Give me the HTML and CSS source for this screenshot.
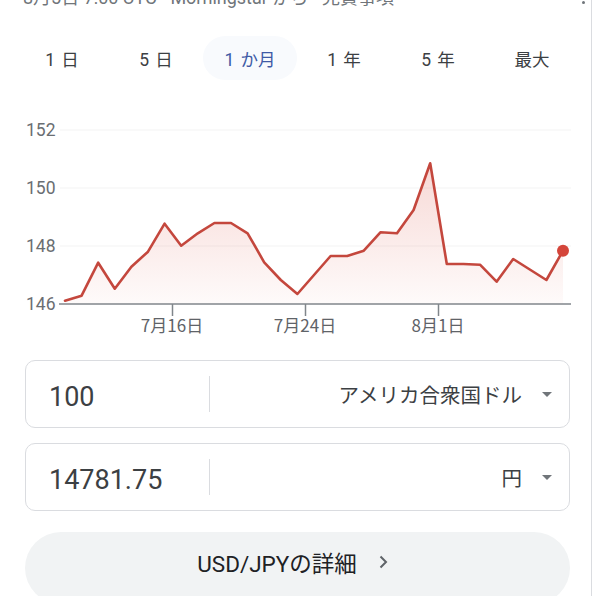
FILE: index.html
```html
<!DOCTYPE html>
<html lang="ja">
<head>
<meta charset="utf-8">
<link rel="stylesheet" href="styles.css">
</head>
<body>
<div class="page">
  <div class="meta">
    <span>8月5日 7:00 UTC · Morningstar から · 免責事項</span>
    <span class="more"></span>
  </div>
  <div class="tabs">
    <div class="tab">1 日</div>
    <div class="tab">5 日</div>
    <div class="tab active">1 か月</div>
    <div class="tab">1 年</div>
    <div class="tab">5 年</div>
    <div class="tab">最大</div>
  </div>
  <svg class="chart" width="591" height="240" viewBox="0 0 591 240" xmlns="http://www.w3.org/2000/svg">
    <defs>
      <linearGradient id="fill" x1="0" y1="60" x2="0" y2="204" gradientUnits="userSpaceOnUse">
        <stop offset="0" stop-color="#e0685c" stop-opacity="0.26"/>
        <stop offset="1" stop-color="#e0685c" stop-opacity="0.03"/>
      </linearGradient>
    </defs>
    <g stroke="#f3f3f3" stroke-width="1">
      <line x1="60" y1="30" x2="571" y2="30"/>
      <line x1="60" y1="88" x2="571" y2="88"/>
      <line x1="60" y1="146" x2="571" y2="146"/>
    </g>
    <g class="ylab">
      <text x="26" y="36">152</text>
      <text x="26" y="94">150</text>
      <text x="26" y="152">148</text>
      <text x="26" y="210">146</text>
    </g>
    <polygon fill="url(#fill)" points="65,200.7 81.6,195.7 98.2,162.7 114.8,188.7 131.4,166.7 148,151.7 164.6,123.7 181.2,145.7 197.8,133.3 214.4,123 231,123 247.6,133.3 264.2,162.3 280.8,180 297.4,194 314,175 330.6,156 347.2,156 363.8,150.7 380.4,132.3 397,133.3 413.6,110 430.2,63.3 446.8,164 463.4,164 480,164.7 496.6,181.7 513.2,159 529.8,169.5 546.4,180 563,150.7 563,204 65,204"/>
    <g stroke="#80868b" stroke-width="1.5">
      <line x1="59" y1="204" x2="571" y2="204"/>
      <line x1="172.5" y1="204" x2="172.5" y2="216"/>
      <line x1="305.5" y1="204" x2="305.5" y2="216"/>
      <line x1="438.5" y1="204" x2="438.5" y2="216"/>
    </g>
    <polyline fill="none" stroke="#c4473d" stroke-width="2.6" stroke-linejoin="round" stroke-linecap="round" points="65,200.7 81.6,195.7 98.2,162.7 114.8,188.7 131.4,166.7 148,151.7 164.6,123.7 181.2,145.7 197.8,133.3 214.4,123 231,123 247.6,133.3 264.2,162.3 280.8,180 297.4,194 314,175 330.6,156 347.2,156 363.8,150.7 380.4,132.3 397,133.3 413.6,110 430.2,63.3 446.8,164 463.4,164 480,164.7 496.6,181.7 513.2,159 529.8,169.5 546.4,180 563,150.7"/>
    <circle cx="563" cy="150.7" r="6" fill="#d4453a"/>
    <g class="xlab">
      <text x="172" y="232">7月16日</text>
      <text x="305" y="232">7月24日</text>
      <text x="438" y="232">8月1日</text>
    </g>
  </svg>
  <div class="field">
    <div class="amount">100</div>
    <div class="divider"></div>
    <div class="unit">
      <span>アメリカ合衆国ドル</span>
      <span class="caret"></span>
    </div>
  </div>
  <div class="field second">
    <div class="amount">14781.75</div>
    <div class="divider"></div>
    <div class="unit">
      <span>円</span>
      <span class="caret"></span>
    </div>
  </div>
  <div class="details">
    <span>USD/JPYの詳細</span>
    <svg class="chev" width="9" height="14" viewBox="0 0 9 14" xmlns="http://www.w3.org/2000/svg"><path d="M1.5 1.5l5.5 5.5-5.5 5.5" fill="none" stroke="#5f6368" stroke-width="2"/></svg>
  </div>
</div>
</body>
</html>
```
FILE: styles.css
```css
* { box-sizing: border-box; }
html, body { margin: 0; padding: 0; background: #fff; }
body {
  font-family: Roboto, "Noto Sans CJK JP", sans-serif;
  color: #202124;
}
.page {
  width: 592px;
  height: 596px;
  border-right: 1px solid #dadce0;
  overflow: hidden;
  background: #fff;
}
.meta {
  margin-top: -11px;
  height: 18px;
  line-height: 18px;
  font-size: 18px;
  color: #70757a;
  padding-left: 23px;
  padding-right: 6px;
  display: flex;
  justify-content: space-between;
  white-space: nowrap;
}
.more {
  width: 3px;
  height: 3px;
  border-radius: 50%;
  background: #70757a;
  margin-top: 12px;
}
.tabs {
  margin-top: 29px;
  padding-left: 15px;
  display: grid;
  grid-template-columns: repeat(6, 94px);
  height: 44px;
}
.tab {
  display: flex;
  align-items: center;
  justify-content: center;
  font-size: 17.5px;
  color: #3c4043;
  border-radius: 22px;
  word-spacing: 2px;
}
.tab.active {
  color: #3f5aa6;
  background: #f8fafd;
}
.chart {
  display: block;
  margin-top: 20px;
}
.ylab text {
  font-family: Roboto, "Noto Sans CJK JP", sans-serif;
  font-size: 17.5px;
  fill: #6a6e72;
}
.xlab text {
  font-family: "Noto Sans CJK JP", sans-serif;
  font-size: 17px;
  fill: #5f6368;
  text-anchor: middle;
}
.field {
  margin-top: 20px;
  margin-left: 25px;
  width: 545px;
  height: 68px;
  border: 1px solid #dadce0;
  border-radius: 10px;
  display: flex;
  align-items: center;
}
.field.second {
  margin-top: 15px;
}
.amount {
  width: 183px;
  padding-left: 23px;
  padding-top: 5px;
  font-size: 27px;
  color: #3c4043;
}
.divider {
  width: 1px;
  height: 36px;
  background: #dadce0;
}
.unit {
  flex: 1;
  display: flex;
  align-items: center;
  justify-content: flex-end;
  padding-right: 17px;
  font-family: "Noto Sans CJK JP", sans-serif;
  font-size: 20.5px;
  color: #3c4043;
}
.caret {
  margin-left: 20px;
  width: 0;
  height: 0;
  border-left: 5px solid transparent;
  border-right: 5px solid transparent;
  border-top: 5px solid #70757a;
}
.details {
  margin-top: 21px;
  margin-left: 25px;
  width: 545px;
  height: 72px;
  padding-bottom: 12px;
  padding-right: 10px;
  border-radius: 36px;
  background: #f1f3f4;
  display: flex;
  align-items: center;
  justify-content: center;
  font-size: 22.5px;
  color: #202124;
}
.chev {
  margin-left: 22px;
}
```
